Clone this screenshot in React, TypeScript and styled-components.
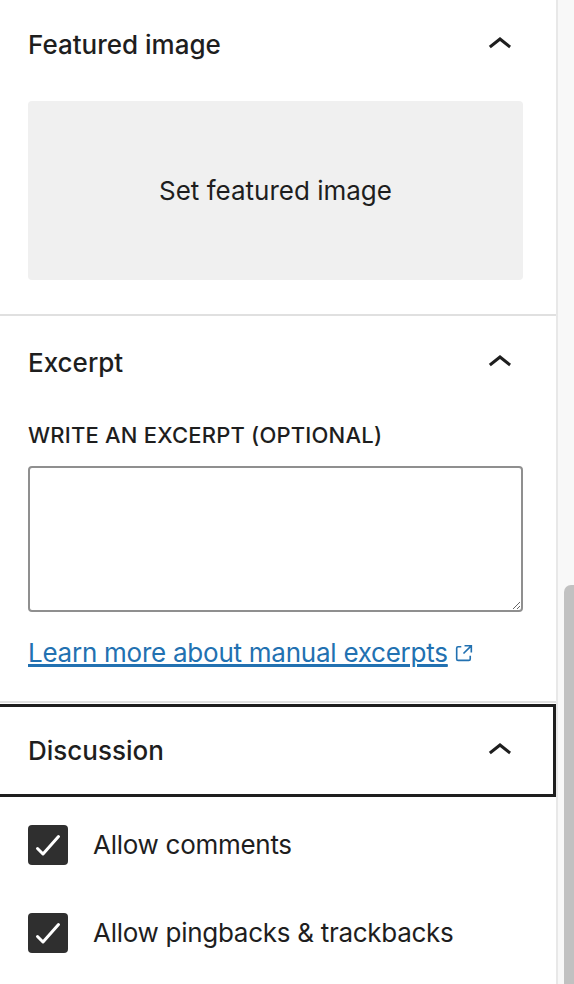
import React, { FC, ReactNode } from "react";
import styled, { createGlobalStyle } from "styled-components";

const GlobalStyle = createGlobalStyle`
  html, body {
    margin: 0;
    padding: 0;
    background: #fff;
    overflow: hidden;
  }

  body {
    font-family: Inter, "Noto Sans", "Liberation Sans", sans-serif;
    color: #1e1e1e;
    -webkit-font-smoothing: antialiased;
  }
`;

// wordpress chevron-up, drawn at 2x
const ChevronUp: FC = () => (
  <svg width="48" height="48" viewBox="0 0 24 24" aria-hidden="true">
    <path
      d="M6.5 12.4L12 8l5.5 4.4-.9 1.2L12 10l-4.6 3.6-1-1.2z"
      fill="#1e1e1e"
    />
  </svg>
);

const ExternalIcon: FC = () => (
  <svg width="26" height="26" viewBox="0 0 24 24" aria-hidden="true">
    <path
      d="M19.5 4.5h-7V6h4.44l-5.97 5.97 1.06 1.06L18 7.06v4.44h1.5v-7Zm-13 1a2 2 0 0 0-2 2v10a2 2 0 0 0 2 2h10a2 2 0 0 0 2-2v-3H17v3a.5.5 0 0 1-.5.5h-10a.5.5 0 0 1-.5-.5v-10a.5.5 0 0 1 .5-.5h3V5.5h-3Z"
      fill="currentColor"
    />
  </svg>
);

interface PanelProps {
  title: string;
  height: number;
  focused?: boolean;
  children: ReactNode;
}

const Panel: FC<PanelProps> = ({ title, height, focused, children }) => (
  <Section>
    <Header $height={height} $focused={focused}>
      <Title>{title}</Title>
      <ChevronUp />
    </Header>
    {children}
  </Section>
);

interface CheckProps {
  label: string;
}

const CheckRow: FC<CheckProps> = ({ label }) => (
  <Row>
    <Box>
      <svg width="40" height="40" viewBox="0 0 40 40" aria-hidden="true">
        <polyline
          points="9.5,23.5 15,29 30.5,11.5"
          fill="none"
          stroke="#fff"
          strokeWidth="3"
          strokeLinecap="round"
          strokeLinejoin="round"
        />
      </svg>
    </Box>
    <RowLabel>{label}</RowLabel>
  </Row>
);

const App: FC = () => (
  <>
    <GlobalStyle />
    <Frame>
      <Sidebar>
        <Panel title="Featured image" height={90}>
          <Body $top={11} $bottom={34}>
            <ImageButton>Set featured image</ImageButton>
          </Body>
        </Panel>

        <Panel title="Excerpt" height={94}>
          <Body $top={13} $bottom={32}>
            <FieldLabel>Write an excerpt (optional)</FieldLabel>
            <Textarea />
            <HelpLink href="#">
              <span>Learn more about manual excerpts</span>
              <ExternalIcon />
            </HelpLink>
          </Body>
        </Panel>

        <Panel title="Discussion" height={93} focused>
          <Body $top={28} $bottom={30}>
            <Checks>
              <CheckRow label="Allow comments" />
              <CheckRow label="Allow pingbacks & trackbacks" />
            </Checks>
          </Body>
        </Panel>
      </Sidebar>

      <Track>
        <Thumb />
      </Track>
    </Frame>
  </>
);

const Frame = styled.div`
  display: flex;
  width: 574px;
  height: 984px;
  overflow: hidden;
`;

const Sidebar = styled.div`
  width: 556px;
  flex-shrink: 0;
  display: flex;
  flex-direction: column;
`;

const Section = styled.section`
  border-top: 2px solid #e0e0e0;

  &:first-child {
    border-top: none;
  }
`;

const Header = styled.div<{ $height: number; $focused?: boolean }>`
  display: flex;
  align-items: center;
  justify-content: space-between;
  box-sizing: border-box;
  height: ${(p) => p.$height}px;
  padding: 0 ${(p) => (p.$focused ? 29 : 32)}px 0 28px;
  margin-top: ${(p) => (p.$focused ? "1px" : "0")};
  border: ${(p) => (p.$focused ? "3px solid #1e1e1e" : "none")};
  border-left: none;
`;

const Title = styled.h2`
  margin: 0;
  font-size: 26px;
  font-weight: 500;
  line-height: 32px;
  color: #1e1e1e;
`;

const Body = styled.div<{ $top: number; $bottom: number }>`
  padding: ${(p) => p.$top}px 33px ${(p) => p.$bottom}px 28px;
  display: flex;
  flex-direction: column;
`;

const ImageButton = styled.button`
  height: 179px;
  border: none;
  border-radius: 4px;
  background: #f0f0f0;
  font-family: inherit;
  font-size: 26px;
  font-weight: 400;
  color: #1e1e1e;
  cursor: pointer;
  padding: 0;
`;

const FieldLabel = styled.label`
  display: block;
  font-size: 22px;
  font-weight: 500;
  line-height: 24px;
  letter-spacing: 0.2px;
  text-transform: uppercase;
  color: #1e1e1e;
`;

const Textarea = styled.textarea`
  margin-top: 19px;
  height: 146px;
  box-sizing: border-box;
  border: 2px solid #8f8f8f;
  border-radius: 4px;
  background: #fff;
  font-family: inherit;
  font-size: 26px;
  resize: vertical;
`;

const HelpLink = styled.a`
  margin-top: 25px;
  display: flex;
  align-items: center;
  gap: 3px;
  font-size: 26px;
  line-height: 32px;
  letter-spacing: -0.25px;
  color: #2271b1;

  span {
    text-decoration: underline;
    text-underline-offset: 3px;
    text-decoration-thickness: 2px;
  }
`;

const Checks = styled.div`
  display: flex;
  flex-direction: column;
  gap: 48px;
`;

const Row = styled.div`
  display: flex;
  align-items: center;
  gap: 25px;
`;

const Box = styled.span`
  width: 40px;
  height: 40px;
  border-radius: 4px;
  background: #2f2f2f;
  flex-shrink: 0;
  display: flex;
`;

const RowLabel = styled.span`
  font-size: 26px;
  line-height: 32px;
  letter-spacing: -0.28px;
  color: #1e1e1e;
`;

const Track = styled.div`
  flex: 1;
  position: relative;
  background: #f8f8f8;
  border-left: 2px solid #e8e8e8;
`;

const Thumb = styled.div`
  position: absolute;
  top: 585px;
  left: 6px;
  right: -6px;
  bottom: 0;
  border-radius: 7px 7px 0 0;
  background: #c1c1c1;
`;

export default App;
